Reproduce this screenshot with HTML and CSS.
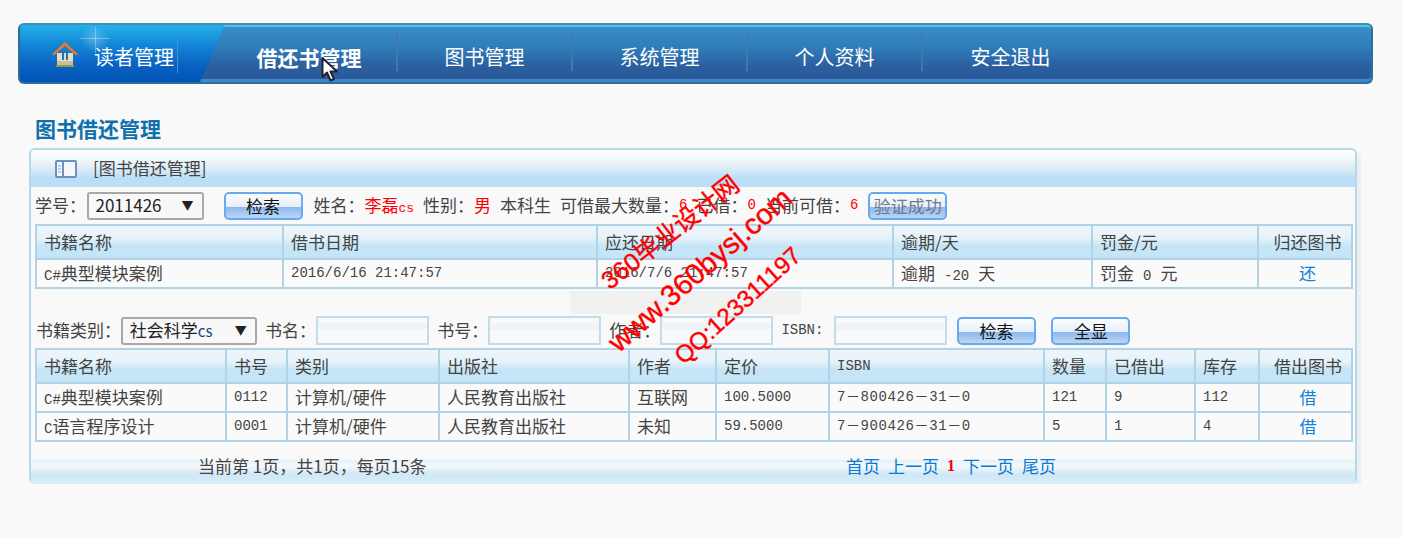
FILE: index.html
```html
<!DOCTYPE html>
<html lang="zh-CN">

<head>
    <meta charset="UTF-8" />
    <title>图书借还管理</title>
    <link rel="stylesheet" href="styles.css">
</head>

<body>
    <!-- Top menu -->
    <nav class="topnav">
        <a class="nav-home" href="#">
            <svg class="home-icon" width="28" height="28" viewBox="0 0 28 28">
                <path d="M6 13h16v12H6z" fill="#e4dcc4" />
                <path d="M6 21h16v4H6z" fill="#c9bd9c" />
                <path d="M5 25h18v2H5z" fill="#8c9a4e" />
                <path d="M1 14 14 2l13 12-2 1.500L14 6 3 15.500z" fill="#e8772e" />
                <path d="M11 13h2v7h-2zM15 13h2v7h-2z" fill="#2f6fa8" />
            </svg>
            <span>读者管理</span>
        </a>
        <a class="nav-item active" href="#">借还书管理</a>
        <a class="nav-item" href="#">图书管理</a>
        <a class="nav-item" href="#">系统管理</a>
        <a class="nav-item" href="#">个人资料</a>
        <a class="nav-item" href="#">安全退出</a>
    </nav>

    <h1 class="page-title">图书借还管理</h1>

    <div class="panel">
        <div class="panel-head">
            <svg class="panel-icon" width="22" height="18" viewBox="0 0 22 18">
                <rect x="1" y="1" width="20" height="16" rx="1" fill="#f4f8fc" stroke="#6c8fc4" stroke-width="2" />
                <path d="M8 1v16" stroke="#6c8fc4" stroke-width="2" />
                <path d="M3 6h3M3 9h3M3 12h3" stroke="#8aa6d0" />
            </svg>
            <span>[图书借还管理]</span>
        </div>

        <!-- Reader lookup -->
        <div class="toolbar">
            <span class="label">学号：</span>
            <span class="select select-id">2011426<i>▼</i></span>
            <button class="btn btn-search">检索</button>
            <span>姓名：</span><b class="red">李磊<small>cs</small></b>
            <span class="after">性别：</span><b class="red">男</b>
            <span class="after">本科生</span>
            <span class="after">可借最大数量：</span><b class="red num">6</b>
            <span class="after">已借：</span><b class="red num">0</b>
            <span class="after">当前可借：</span><b class="red num">6</b>
            <button class="btn btn-ok">验证成功</button>
        </div>

        <table class="grid">
            <colgroup>
                <col class="w247"><col class="w314"><col class="w296"><col class="w199"><col class="w166"><col class="w94">
            </colgroup>
            <tr>
                <th>书籍名称</th>
                <th>借书日期</th>
                <th>应还日期</th>
                <th>逾期/天</th>
                <th>罚金/元</th>
                <th class="center">归还图书</th>
            </tr>
            <tr>
                <td><span class="num">C#</span>典型模块案例</td>
                <td class="num">2016/6/16 21:47:57</td>
                <td class="num">2016/7/6 21:47:57</td>
                <td>逾期<span class="num spaced">-20</span>天</td>
                <td>罚金<span class="num spaced">0</span>元</td>
                <td class="center"><a href="#">还</a></td>
            </tr>
        </table>

        <!-- Book search -->
        <div class="toolbar toolbar-books">
            <span class="label">书籍类别：</span>
            <span class="select select-type">社会科学<small>cs</small><i>▼</i></span>
            <span class="label">书名：</span><input class="field" type="text">
            <span class="label">书号：</span><input class="field" type="text">
            <span class="label">作者：</span><input class="field" type="text">
            <span class="num isbn-label">ISBN:</span><input class="field" type="text">
            <button class="btn btn-find">检索</button>
            <button class="btn btn-all">全显</button>
        </div>

        <table class="grid">
            <colgroup>
                <col class="w190"><col class="w61"><col class="w152"><col class="w190"><col class="w87"><col class="w113">
                <col class="w215"><col class="w62"><col class="w89"><col class="w64"><col class="w93">
            </colgroup>
            <tr>
                <th>书籍名称</th>
                <th>书号</th>
                <th>类别</th>
                <th>出版社</th>
                <th>作者</th>
                <th>定价</th>
                <th class="num">ISBN</th>
                <th>数量</th>
                <th>已借出</th>
                <th>库存</th>
                <th class="center">借出图书</th>
            </tr>
            <tr>
                <td><span class="num">C#</span>典型模块案例</td>
                <td class="num">0112</td>
                <td>计算机/硬件</td>
                <td>人民教育出版社</td>
                <td>互联网</td>
                <td class="num">100.5000</td>
                <td class="num isbn">7－800426－31－0</td>
                <td class="num">121</td>
                <td class="num">9</td>
                <td class="num">112</td>
                <td class="center"><a href="#">借</a></td>
            </tr>
            <tr>
                <td><span class="num">C</span>语言程序设计</td>
                <td class="num">0001</td>
                <td>计算机/硬件</td>
                <td>人民教育出版社</td>
                <td>未知</td>
                <td class="num">59.5000</td>
                <td class="num isbn">7－900426－31－0</td>
                <td class="num">5</td>
                <td class="num">1</td>
                <td class="num">4</td>
                <td class="center"><a href="#">借</a></td>
            </tr>
        </table>

        <div class="panel-foot">
            <span class="page-info">当前第 1页，共1页，每页15条</span>
            <span class="pager">
                <a href="#">首页</a>
                <a href="#">上一页</a>
                <b>1</b>
                <a href="#">下一页</a>
                <a href="#">尾页</a>
            </span>
        </div>
    </div>

    <!-- Things lying over the page: capture smudge, mouse pointer, watermark -->
    <div class="smudge"></div>
    <svg class="pointer" width="18" height="26" viewBox="0 0 18 26">
        <path d="M1.500 1v19l4.500-4.500 3.500 8 3.500-1.500-3.500-7.500h6.500z" fill="#fff" stroke="#223" stroke-width="2" stroke-linejoin="round" />
    </svg>
    <div class="mark mark-site">360毕业设计网</div>
    <div class="mark mark-url">www.360bysj.com</div>
    <div class="mark mark-qq">QQ:123311197</div>
</body>

</html>
```

FILE: styles.css
```css
/* --- page --- */
body {
    margin: 0;
    background-color: #f9f9f9;
    color: #444;
    font-family: "Noto Sans CJK SC", "Liberation Sans", sans-serif;
    font-size: 17px;
    line-height: 1.2;
    overflow: hidden;
}

a {
    text-decoration: none;
}

/* --- top menu --- */
.topnav {
    display: flex;
    box-sizing: border-box;
    width: 1355px;
    height: 61px;
    margin: 23px 0 0 18px;
    border: 2px solid #2c6f99;
    border-top-color: #3f8eb4;
    border-radius: 6px;
    box-shadow: inset 0 2px 0 #56c0e4, inset 0 -3px 0 #3f86cc;
    background: linear-gradient(#3a8ec8 0%, #2f7cb9 40%, #2b5f9f 72%, #2a5797 100%);
    overflow: hidden;
}

.nav-home {
    display: flex;
    align-items: center;
    width: 205px;
    height: 100%;
    margin-right: -3px;
    flex: none;
    background:
        linear-gradient(rgba(255, 255, 255, 0.3), rgba(255, 255, 255, 0.3)) 75px 2px / 1px 26px no-repeat,
        linear-gradient(rgba(255, 255, 255, 0.3), rgba(255, 255, 255, 0.3)) 60px 13px / 30px 1px no-repeat,
        radial-gradient(circle at 75px 14px, rgba(255, 255, 255, 0.25) 0, rgba(255, 255, 255, 0) 14px),
        linear-gradient(#25b0ea 0%, #1286d6 35%, #0a62c2 70%, #0054b6 100%);
    clip-path: polygon(0 0, 100% 0, 180px 100%, 0 100%);
    color: #fff;
    font-size: 20px;
}

.home-icon {
    margin: 0 15px 0 31px;
}

.nav-home span {
    height: 36px;
    margin-top: 3px;
    padding-right: 3px;
    border-right: 1px solid #3d92d6;
    line-height: 40px;
}

.nav-item {
    box-sizing: border-box;
    width: 175px;
    height: 36px;
    margin-top: 10px;
    border-right: 2px solid #3f78ad;
    color: #fff;
    font-size: 20px;
    line-height: 44px;
    text-align: center;
}

.nav-item.active {
    width: 176px;
    font-size: 21px;
    font-weight: bold;
}

.nav-item:last-child {
    border-right: none;
}

/* --- title and panel --- */
.page-title {
    margin: 29px 0 5px 35px;
    color: #0f70ad;
    font-size: 21px;
    font-weight: bold;
    line-height: 30px;
}

.panel {
    box-sizing: border-box;
    width: 1328px;
    height: 336px;
    margin-left: 29px;
    border: 2px solid #b4d8ec;
    border-radius: 6px;
    box-shadow: 4px 4px 2px #eeeeee;
}

.panel-head {
    display: flex;
    align-items: center;
    height: 37px;
    background: linear-gradient(#ffffff 0%, #eef6f9 30%, #dcecf6 50%, #bbdff6 75%, #b9def6 100%);
    border-radius: 4px 4px 0 0;
}

.panel-icon {
    margin: 0 16px 0 24px;
}

.toolbar {
    display: flex;
    align-items: center;
    height: 29px;
    margin: 4px 0 4px 4px;
}

.toolbar-books {
    gap: 8.3px;
    margin: 27px 0 3px 5px;
}

/* half-width colons, as the labels have them */
.label {
    font-feature-settings: "halt";
}

.after {
    margin-left: 9px;
}

.select {
    display: flex;
    align-items: center;
    justify-content: space-between;
    box-sizing: border-box;
    height: 28px;
    padding: 0 8px 0 7px;
    border: 2px solid #a8a8a8;
    border-radius: 3px;
    background: #f8f8f8;
    color: #222;
}

.select i {
    font-size: 12px;
    font-style: normal;
}

.select small {
    margin-right: auto;
    color: #1c3f88;
    font-size: 15px;
}

.select-id {
    width: 117px;
    margin: 0 20px 0 9px;
}

.select-type {
    width: 136px;
}

.btn {
    box-sizing: border-box;
    width: 79px;
    height: 28px;
    padding: 0;
    border: 2px solid #66aaf0;
    border-radius: 5px;
    background: linear-gradient(#fbfcfe 0%, #e6eefa 55%, #8bb9ee 56%, #bcd6f4 100%);
    color: #111;
    font-family: inherit;
    font-size: 17px;
    line-height: 22px;
}

.btn-search {
    margin-right: 11px;
}

.btn-ok {
    margin-left: 10px;
    color: #778;
}

.btn-find {
    margin-left: 2px;
}

.btn-all {
    margin-left: 7px;
}

.red {
    color: #f00;
    font-weight: normal;
}

.red small {
    font-family: "Liberation Mono", monospace;
    font-size: 13px;
}

.num {
    font-family: "Liberation Mono", "Noto Sans CJK SC", monospace;
    font-size: 14px;
}

.spaced {
    margin: 0 9px;
}

.isbn {
    letter-spacing: 0.6px;
}

.isbn-label {
    margin-right: 2px;
}

.field {
    box-sizing: border-box;
    width: 113px;
    height: 29px;
    padding: 0;
    border: 2px solid #c4dcea;
    background: linear-gradient(#f9f9f9 0 5px, #eef4f9 5px 12px, #f9f9f9 12px);
}

/* --- tables --- */
.grid {
    width: 1316px;
    margin-left: 4px;
    border-collapse: collapse;
    table-layout: fixed;
}

.grid th,
.grid td {
    padding: 0 0 0 7px;
    border: 2px solid #b2d3e6;
    font-weight: normal;
    text-align: left;
    white-space: nowrap;
}

.grid th {
    height: 32px;
    background: linear-gradient(#edf5fb 0%, #e6f2f9 38%, #c6e6f8 60%, #c4e5f7 100%);
}

.grid td {
    height: 27px;
    background: #fafafa;
}

.grid .center {
    padding: 0 0 0 5px;
    text-align: center;
}

.grid a {
    color: #0f82dc;
}

.w247 { width: 247px; }
.w314 { width: 314px; }
.w296 { width: 296px; }
.w199 { width: 199px; }
.w166 { width: 166px; }
.w94 { width: 94px; }
.w190 { width: 190px; }
.w61 { width: 61px; }
.w152 { width: 152px; }
.w87 { width: 87px; }
.w113 { width: 113px; }
.w215 { width: 215px; }
.w62 { width: 62px; }
.w89 { width: 89px; }
.w64 { width: 64px; }
.w93 { width: 93px; }

/* --- pager strip --- */
.panel-foot {
    display: flex;
    height: 30px;
    margin-top: 12px;
    line-height: 24px;
    background: linear-gradient(#e4f1f8 0%, #f4f9fb 25%, #cfe7f6 60%, #d8ecf7 100%) bottom / 100% 24px no-repeat;
}

.page-info {
    width: 648px;
    margin-left: 167px;
}

.pager {
    display: flex;
    gap: 8px;
}

.pager a {
    color: #0f78d2;
}

.pager b {
    color: #f00;
    font-family: "Liberation Serif", serif;
    font-size: 16px;
}

/* --- overlays --- */
.smudge {
    position: absolute;
    left: 570px;
    top: 291px;
    width: 231px;
    height: 23px;
    background: #f1f1f1;
}

.pointer {
    position: absolute;
    left: 321px;
    top: 57px;
}

.mark {
    position: absolute;
    color: #f00;
    font-family: "Liberation Sans", "Noto Sans CJK SC", sans-serif;
    white-space: nowrap;
    -webkit-text-stroke: 0.4px #f00;
    transform: translate(-50%, -50%) rotate(-41deg);
}

.mark-site {
    left: 670px;
    top: 232px;
    font-size: 25px;
    transform: translate(-50%, -50%) rotate(-38deg);
}

.mark-url {
    left: 700px;
    top: 270px;
    font-size: 29px;
}

.mark-qq {
    left: 738px;
    top: 306px;
    font-size: 24px;
    transform: translate(-50%, -50%) rotate(-42deg);
}
```
